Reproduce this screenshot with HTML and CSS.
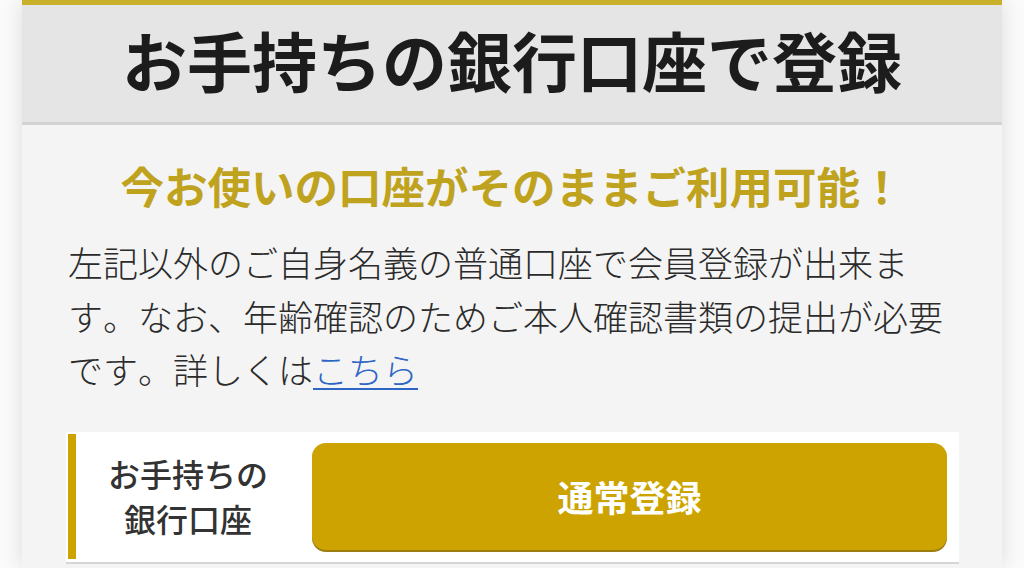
FILE: index.html
```html
<!DOCTYPE html>
<html lang="ja">
<head>
<meta charset="utf-8">
<title>お手持ちの銀行口座で登録</title>
<link rel="stylesheet" href="styles.css">
</head>
<body>
<div class="card">
  <header class="card-header">
    <h1 class="title">お手持ちの銀行口座で登録</h1>
  </header>
  <div class="card-body">
    <p class="lead">今お使いの口座がそのままご利用可能！</p>
    <p class="desc">左記以外のご自身名義の普通口座で会員登録が出来ます。なお、年齢確認のためご本人確認書類の提出が必要です。詳しくは<a class="link" href="#">こちら</a></p>
    <div class="option">
      <div class="option-label">お手持ちの<br>銀行口座</div>
      <a class="option-btn" href="#">通常登録</a>
    </div>
  </div>
</div>
</body>
</html>
```

FILE: styles.css
```css
html, body {
  margin: 0;
  padding: 0;
}
body {
  width: 1024px;
  height: 568px;
  overflow: hidden;
  background: #fbfbfb;
  font-family: "Noto Sans CJK JP", "Noto Sans", sans-serif;
  font-kerning: none;
}
.card {
  margin: 0 22px;
  height: 563px;
  overflow: hidden;
  background: #f4f4f4;
  border-top: 5px solid #c8b02b;
  box-shadow: 0 0 22px rgba(0, 0, 0, 0.13);
}
.card-header {
  height: 120px;
  background: #e5e5e5;
  border-bottom: 3px solid #d2d2d2;
  display: flex;
  align-items: center;
  justify-content: center;
  box-sizing: border-box;
}
.title {
  margin: 0 0 8px;
  font-size: 65px;
  line-height: 1;
  font-weight: 700;
  color: #1c1c1c;
}
.card-body {
  padding: 0 46px;
}
.lead {
  margin: 0;
  padding-top: 31px;
  font-size: 43.5px;
  line-height: 60px;
  font-weight: 700;
  color: #bfa31f;
  text-align: center;
}
.desc {
  margin: 19px 0 0;
  font-size: 35px;
  line-height: 53.5px;
  font-weight: 300;
  color: #2b2b2b;
}
.link {
  color: #2d66c4;
  text-decoration: underline;
  text-underline-offset: 4px;
  text-decoration-thickness: 2px;
}
.option {
  margin: 36px -3px 0 -2px;
  height: 107px;
  background: #fff;
  border-bottom: 2px solid #d6d6d6;
  display: flex;
  padding: 11px 12px 12px 2px;
}
.option-label {
  width: 224px;
  margin: -9px 0;
  border-left: 8px solid #cca300;
  display: flex;
  align-items: center;
  justify-content: center;
  text-align: center;
  font-size: 32px;
  line-height: 45px;
  font-weight: 500;
  color: #333;
}
.option-btn {
  flex: 1;
  margin-left: 12px;
  border-radius: 14px;
  background: #cca300;
  box-shadow: 0 2px 0 #9c7e10;
  display: flex;
  align-items: center;
  justify-content: center;
  color: #fff;
  font-size: 36px;
  font-weight: 700;
  text-decoration: none;
}
```
